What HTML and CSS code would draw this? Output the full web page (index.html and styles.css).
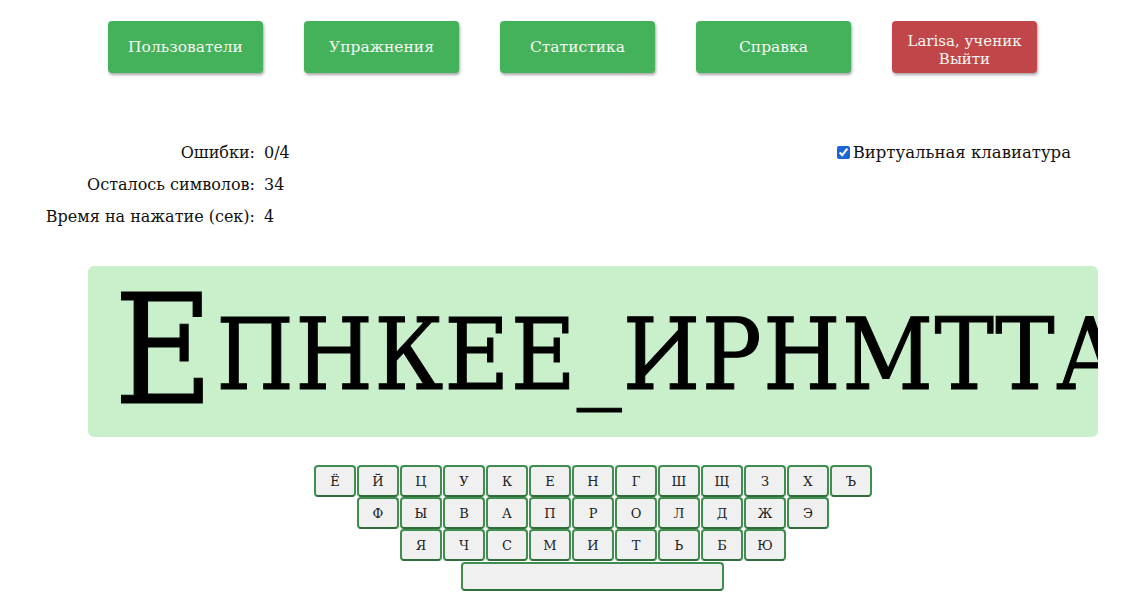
FILE: index.html
```html
<!DOCTYPE html>
<html lang="ru">
<head>
<meta charset="utf-8">
<title>Тренажёр</title>
<link rel="stylesheet" href="styles.css">
</head>
<body>
<nav class="nav">
  <a class="btn">Пользователи</a>
  <a class="btn">Упражнения</a>
  <a class="btn">Статистика</a>
  <a class="btn">Справка</a>
  <a class="btn btn-red">Larisa, ученик<br>Выйти</a>
</nav>
<section class="info">
  <div class="stats">
    <span class="lbl">Ошибки:</span><span class="val">0/4</span>
    <span class="lbl">Осталось символов:</span><span class="val">34</span>
    <span class="lbl">Время на нажатие (сек):</span><span class="val">4</span>
  </div>
  <label class="vk"><input type="checkbox" checked class="vk-box">Виртуальная клавиатура</label>
</section>
<div class="board">
  <span class="cur">Е</span><span class="rest">ПНКЕЕ_ИРНМТТАОЛДЖСВЫФ_ЯЧСМИТЬБЮХЗЩ</span>
</div>
<div class="kbd">
  <div class="row r1">
    <span class="key">Ё</span><span class="key">Й</span><span class="key">Ц</span><span class="key">У</span><span class="key">К</span><span class="key">Е</span><span class="key">Н</span><span class="key">Г</span><span class="key">Ш</span><span class="key">Щ</span><span class="key">З</span><span class="key">Х</span><span class="key">Ъ</span>
  </div>
  <div class="row r2">
    <span class="key">Ф</span><span class="key">Ы</span><span class="key">В</span><span class="key">А</span><span class="key">П</span><span class="key">Р</span><span class="key">О</span><span class="key">Л</span><span class="key">Д</span><span class="key">Ж</span><span class="key">Э</span>
  </div>
  <div class="row r3">
    <span class="key">Я</span><span class="key">Ч</span><span class="key">С</span><span class="key">М</span><span class="key">И</span><span class="key">Т</span><span class="key">Ь</span><span class="key">Б</span><span class="key">Ю</span>
  </div>
  <div class="row r4">
    <span class="key space"></span>
  </div>
</div>
</body>
</html>
```
FILE: styles.css
```css
html, body {
  margin: 0;
  padding: 0;
  background: #fff;
}
body {
  font-family: "DejaVu Serif", serif;
  color: #111;
  width: 1134px;
  overflow: hidden;
}
.nav {
  display: flex;
  gap: 41px;
  padding: 21px 0 0 108px;
  height: 52px;
}
.btn {
  display: flex;
  align-items: center;
  justify-content: center;
  text-align: center;
  width: 155px;
  height: 52px;
  box-sizing: border-box;
  background: #44b15b;
  color: #f4f6f2;
  border-radius: 4px;
  font-size: 15.5px;
  line-height: 19px;
  box-shadow: 1px 2px 3px rgba(0,0,0,0.35);
}
.btn-red {
  width: 145px;
  background: #c0464a;
  font-size: 15px;
  line-height: 18px;
  padding-top: 6px;
}
.info {
  display: flex;
  justify-content: space-between;
  align-items: flex-start;
  padding: 69px 63px 0 0;
  height: 124px;
}
.stats {
  display: grid;
  grid-template-columns: 255px auto;
  column-gap: 9px;
  row-gap: 11px;
  font-size: 16px;
  line-height: 21px;
}
.lbl { text-align: right; }
.vk {
  display: flex;
  align-items: center;
  font-size: 16.5px;
  line-height: 21px;
  height: 21px;
}
.vk-box {
  margin: 0 3px 0 0;
  width: 13px;
  height: 13px;
  accent-color: #1a66d6;
}
.board {
  margin: 0 36px 0 88px;
  height: 171px;
  background: #caf0cb;
  border-radius: 6px;
  display: flex;
  align-items: center;
  padding-left: 26px;
  overflow: hidden;
  white-space: nowrap;
  color: #000;
  font-family: "DejaVu Serif Condensed", "DejaVu Serif", serif;
  -webkit-text-stroke: 1px #000;
}
.cur {
  font-size: 151px;
  line-height: 1;
  flex: none;
}
.rest {
  font-size: 99px;
  line-height: 1;
  margin-top: 6px;
  letter-spacing: 1.3px;
  padding-left: 3px;
  flex: none;
}
.kbd {
  padding: 28px 0 0 314px;
}
.row {
  display: flex;
  gap: 1px;
}
.r2 { padding-left: 43px; }
.r3 { padding-left: 86px; }
.r4 { padding-left: 147px; padding-top: 1px; }
.key {
  width: 42px;
  height: 32px;
  box-sizing: border-box;
  border: 2px solid #3f8e4e;
  border-bottom-color: #2f6d3b;
  border-radius: 4px;
  background: #f0f0f0;
  display: flex;
  align-items: center;
  justify-content: center;
  font-size: 13px;
  color: #222;
}
.space {
  width: 263px;
  height: 29px;
}
```
